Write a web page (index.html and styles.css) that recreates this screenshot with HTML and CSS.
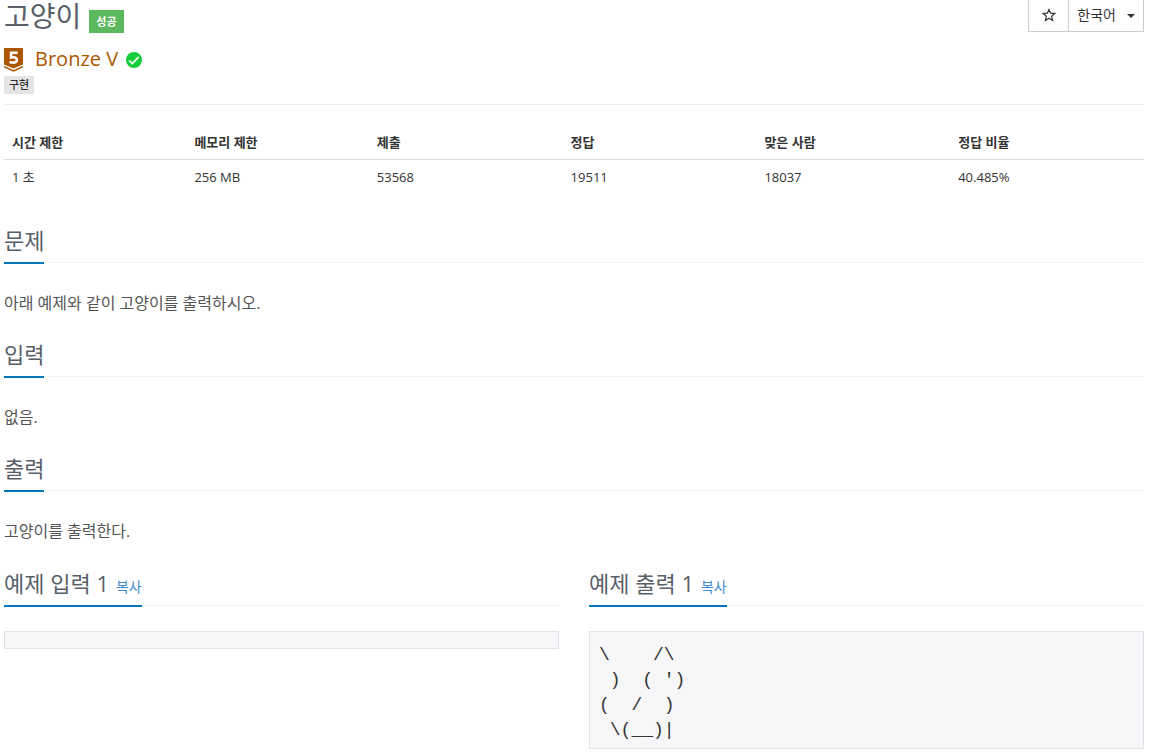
FILE: index.html
```html
<!DOCTYPE html>
<html lang="ko">
<head>
<meta charset="utf-8">
<title>고양이</title>
<link rel="stylesheet" href="styles.css">
</head>
<body>
<main class="page">
  <header class="problem-header">
    <div class="heading">
      <div class="title-row">
        <h1 class="title">고양이</h1>
        <span class="badge">성공</span>
      </div>
      <div class="tier-row">
        <svg class="tier-icon" viewBox="0 0 19 24" aria-hidden="true">
          <path fill="#ad5600" d="M0 0h19v16.500l-9.500 4L0 16.500z"/>
          <path fill="none" stroke="#ad5600" stroke-width="1.600" d="M0 18.700l9.500 4.200 9.500-4.200"/>
          <path fill="none" stroke="#fff" stroke-width="2.600" d="M13.600 4.800H7.100v4.700c3-.8 5.800 0 5.800 2.500 0 2.700-3.600 3.200-7.400 2"/>
        </svg>
        <span class="tier-name">Bronze V</span>
        <svg class="check-icon" viewBox="0 0 16 16" aria-hidden="true">
          <circle cx="8" cy="8" r="8" fill="#16ce3c"/>
          <path fill="none" stroke="#fff" stroke-width="1.600" d="M3.200 8.500l3.200 3.100 6.300-6.700"/>
        </svg>
      </div>
      <span class="tag">구현</span>
    </div>
    <div class="button-group">
      <button class="tool star" type="button" aria-label="즐겨찾기">
        <svg class="star-icon" viewBox="0 0 14 14" aria-hidden="true">
          <path fill="none" stroke="#333" stroke-width="1.200" stroke-linejoin="miter" d="M7 1.500l1.600 3.700 4.200.4-3.200 2.700 1 4.200L7 10.300l-3.600 2.200 1-4.200-3.200-2.700 4.200-.4z"/>
        </svg>
      </button>
      <button class="tool language" type="button">한국어 <span class="caret"></span></button>
    </div>
  </header>

  <table class="info">
    <thead>
      <tr><th class="narrow">시간 제한</th><th class="narrow">메모리 제한</th><th>제출</th><th>정답</th><th>맞은 사람</th><th>정답 비율</th></tr>
    </thead>
    <tbody>
      <tr><td>1 초</td><td>256 MB</td><td>53568</td><td>19511</td><td>18037</td><td>40.485%</td></tr>
    </tbody>
  </table>

  <section class="section">
    <div class="headline"><h2>문제</h2></div>
    <p>아래 예제와 같이 고양이를 출력하시오.</p>
  </section>
  <section class="section">
    <div class="headline"><h2>입력</h2></div>
    <p>없음.</p>
  </section>
  <section class="section">
    <div class="headline"><h2>출력</h2></div>
    <p>고양이를 출력한다.</p>
  </section>

  <div class="samples">
    <section class="sample">
      <div class="headline"><h2>예제 입력 1<a class="copy" href="#">복사</a></h2></div>
      <pre class="data"></pre>
    </section>
    <section class="sample">
      <div class="headline"><h2>예제 출력 1<a class="copy" href="#">복사</a></h2></div>
      <pre class="data">\    /\
 )  ( ')
(  /  )
 \(__)|</pre>
    </section>
  </div>
</main>
</body>
</html>
```
FILE: styles.css
```css
* {
  box-sizing: border-box;
}

body {
  margin: 0;
  background: #fff;
  color: #333;
  font-family: "Open Sans", "Noto Sans CJK KR", sans-serif;
  font-size: 13px;
  line-height: 20px;
}

.page {
  padding: 0 5px 4px 4px;
}

.problem-header {
  display: flex;
  justify-content: space-between;
  align-items: flex-start;
  padding-bottom: 10px;
  border-bottom: 1px solid #eee;
}

.title-row {
  display: flex;
  align-items: flex-end;
  gap: 8px;
}

.title {
  margin: 0;
  color: #585f69;
  font-size: 28px;
  font-weight: 400;
  line-height: 33px;
}

.badge {
  padding: 0 7px;
  background: #5cb85c;
  color: #fff;
  font-size: 11px;
  font-weight: 700;
  line-height: 23px;
}

.tier-row {
  display: flex;
  align-items: center;
  margin-top: 12px;
}

.tier-icon {
  width: 19px;
  height: 24px;
}

.tier-name {
  margin: 0 8px 0 12px;
  padding-bottom: 2px;
  color: #ad5600;
  font-size: 20px;
  line-height: 28px;
}

.check-icon {
  width: 16px;
  height: 16px;
}

.tag {
  display: block;
  width: fit-content;
  margin-top: 1px;
  padding: 0 5px;
  background: #e5e5e5;
  color: #000;
  font-size: 11px;
  line-height: 18px;
}

.button-group {
  display: flex;
}

.tool {
  display: flex;
  align-items: center;
  justify-content: center;
  height: 32px;
  margin: 0;
  padding: 0 8px 2px;
  border: 1px solid #ccc;
  border-top: 0;
  background: #fff;
  color: #333;
  font: inherit;
  font-size: 14px;
}

.star {
  width: 40px;
  border-right: 0;
}

.star-icon {
  width: 14px;
  height: 14px;
}

.language {
  gap: 11px;
}

.caret {
  margin-top: 2px;
  border: 4px solid transparent;
  border-top-color: #333;
  border-bottom: 0;
}

.info {
  width: 100%;
  margin: 19px 0 34px;
  border-collapse: collapse;
  table-layout: fixed;
}

.info th,
.info td {
  width: 17%;
  padding: 7px 8px;
  text-align: left;
}

.info th {
  padding-top: 8px;
  border-bottom: 1px solid #ddd;
}

.info .narrow {
  width: 16%;
}

.headline {
  border-bottom: 1px dotted #e4e4e4;
}

.headline h2 {
  width: fit-content;
  height: 36px;
  margin: 0 0 -2px;
  border-bottom: 2px solid #0076c0;
  color: #585f69;
  font-size: 22px;
  font-weight: 400;
  line-height: 24px;
}

.section p {
  margin: 28px 0 26px;
  color: #555;
  font-size: 16px;
  line-height: 25px;
}

.samples {
  display: grid;
  grid-template-columns: 1fr 1fr;
  gap: 30px;
  padding-top: 1px;
}

.copy {
  margin-left: 7px;
  color: #428bca;
  font-size: 14px;
  line-height: 20px;
  text-decoration: none;
}

.data {
  margin: 25px 0 0;
  padding: 11px 9px 5px;
  border: 1px solid #e1e1e8;
  background: #f7f7f9;
  color: #333;
  font-family: "Liberation Mono", monospace;
  font-size: 18px;
  line-height: 25px;
}

.sample {
  min-width: 0;
}
```
